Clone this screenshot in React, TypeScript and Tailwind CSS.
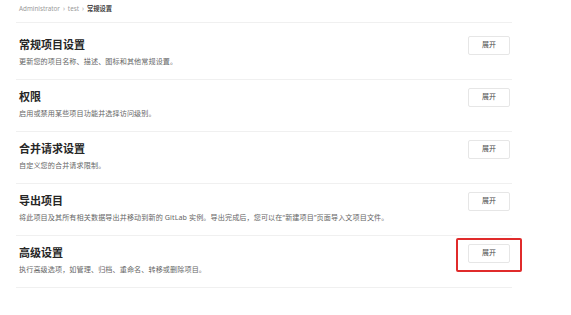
const sections = [
  { title: '常规项目设置', desc: '更新您的项目名称、描述、图标和其他常规设置。' },
  { title: '权限', desc: '启用或禁用某些项目功能并选择访问级别。' },
  { title: '合并请求设置', desc: '自定义您的合并请求限制。' },
  {
    title: '导出项目',
    desc: '将此项目及其所有相关数据导出并移动到新的 GitLab 实例。导出完成后，您可以在“新建项目”页面导入文项目文件。',
  },
  { title: '高级设置', desc: '执行高级选项，如管理、归档、重命名、转移或删除项目。', highlighted: true },
];

function ExpandButton({ highlighted }: { highlighted?: boolean }) {
  return (
    <div className="relative mt-[-1px] shrink-0">
      <button className="flex h-[19px] w-[42px] items-center justify-center rounded-[2px] border border-[#e6e6e6] bg-white text-[7px] text-[#4a4a4a]">
        展开
      </button>
      {highlighted && (
        <div className="pointer-events-none absolute -left-[12px] -top-[6px] h-[34px] w-[66px] rounded-[2px] border-2 border-[#e02b2b]" />
      )}
    </div>
  );
}

export default function App() {
  return (
    <div
      className="h-[315px] w-[571px] bg-white pl-[16px] text-[#303030]"
      style={{ fontFamily: '"Noto Sans", "Noto Sans CJK SC", sans-serif' }}
    >
      <div className="w-[496px]">
        <div className="flex h-[23px] items-center gap-[3px] border-b border-[#f0f0f0] pb-[4px] pl-[3px] text-[6.3px] text-[#9a9a9a]">
          <span>Administrator</span>
          <span>›</span>
          <span>test</span>
          <span>›</span>
          <span className="font-bold text-[#444]">常规设置</span>
        </div>
        {sections.map((s, i) => (
          <div
            key={s.title}
            className={`flex items-start justify-between border-b border-[#f0f0f0] pl-[3px] pr-[2px] pb-[13px] ${
              i === 0 ? 'pt-[14px]' : 'pt-[9px]'
            }`}
          >
            <div>
              <h2 className="mt-[1px] text-[11px] leading-[14px] font-bold text-[#262626]">{s.title}</h2>
              <p className="mt-[4px] text-[7.1px] leading-[10px] tracking-[0.1px] text-[#666]">{s.desc}</p>
            </div>
            <ExpandButton highlighted={s.highlighted} />
          </div>
        ))}
      </div>
    </div>
  );
}
